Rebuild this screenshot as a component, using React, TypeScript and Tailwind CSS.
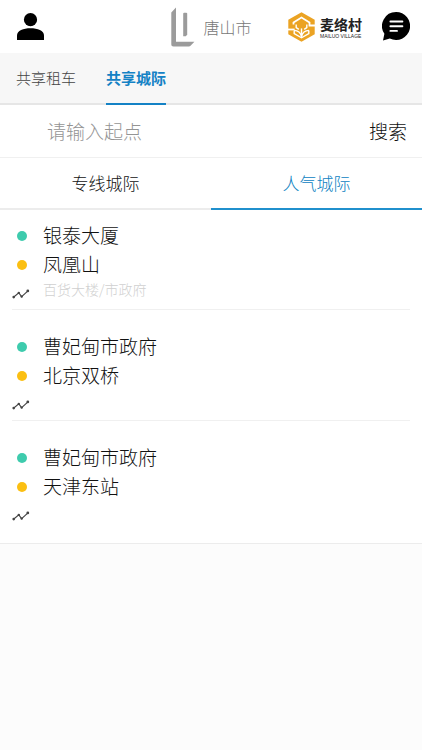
import { useState } from 'react';
import clsx from 'clsx';

interface Route {
  from: string;
  to: string;
  via?: string;
}

const ROUTES: Route[] = [
  { from: '银泰大厦', to: '凤凰山', via: '百货大楼/市政府' },
  { from: '曹妃甸市政府', to: '北京双桥' },
  { from: '曹妃甸市政府', to: '天津东站' },
];

const SERVICES = ['共享租车', '共享城际'];
const LINES = ['专线城际', '人气城际'];

function UserIcon() {
  return (
    <svg width="27" height="27" viewBox="0 0 27 27" fill="#000">
      <circle cx="13.5" cy="6.7" r="6.6" />
      <path d="M0 27v-4.6C0 17.6 6.4 15.2 13.5 15.2S27 17.6 27 22.4V27z" />
    </svg>
  );
}

function CityLogo() {
  return (
    <svg width="24" height="40" viewBox="0 0 24 40" fill="#9b9b9b">
      <path d="M0.3 5.5L5 0.6V34.8h18.4l-3.6 3.8c-.6.6-1.2.9-2 .9H2.5c-1.4 0-2.2-.8-2.2-2.2z" />
      <path d="M12.2 6.8q0-1 1-1h2q1 0 1 1v21l-1.4 1.4h-2.6z" />
    </svg>
  );
}

function VillageLogo() {
  return (
    <svg width="27" height="30" viewBox="0 0 27 30">
      <path d="M13.5 0.3L26.7 7.7v14.6L13.5 29.7 0.3 22.3V7.7z" fill="#eba323" />
      <path d="M4.6 12.6V10l8.9-5.4 8.9 5.4v2.6H27v1.8h-6.4V11l-7.1-4.4L6.4 11v1.6z" fill="#fff" />
      <path d="M0 16.6h6.6v1.8H0z" fill="#fff" />
      <path d="M8.4 12.4l5.1-3.8 5.1 3.8v3.2l-5.1 4-5.1-4z" fill="#eba323" />
      <g fill="none" stroke="#fff" strokeWidth="1.4">
        <path d="M8.2 12.4v3.2l2.6 1.8M18.8 12.4v3.2l-2.6 1.8" />
        <path d="M13.5 16.4v9.4" />
        <path d="M6 18.4c4 .2 6.6 2.2 7.5 6 .9-3.8 3.5-5.8 7.5-6" />
        <path d="M6.2 18.4v3.2l7.3 4.2 7.3-4.2v-3.2" />
      </g>
    </svg>
  );
}

function ChatIcon() {
  return (
    <svg width="28" height="29" viewBox="0 0 28 29">
      <path d="M14 0a14 14 0 1 1-6.2 26.5L1 28.4l1.4-6.6A14 14 0 0 1 14 0z" fill="#000" />
      <path d="M8.4 9.5h12M8.4 14.2h12M8.4 18.9h6.6" stroke="#fff" strokeWidth="1.9" strokeLinecap="round" />
    </svg>
  );
}

function RouteIcon() {
  return (
    <svg width="18" height="10" viewBox="0 0 18 10" fill="#444" stroke="#444">
      <path d="M1.5 8.2L6.8 3.9 9.6 7.6 16 1.8" fill="none" strokeWidth="1.1" />
      <g stroke="none">
        <circle cx="1.7" cy="8.1" r="1.3" />
        <circle cx="6.8" cy="3.9" r="1.2" />
        <circle cx="9.7" cy="7.6" r="1.2" />
        <circle cx="15.8" cy="1.9" r="1.4" />
      </g>
    </svg>
  );
}

function RouteItem({ route }: { route: Route }) {
  return (
    <li className="mx-3 h-[111px] border-b border-[#f0f0f0] pt-[22px] first:h-[99px] first:pt-[10px] last:border-b-0">
      <div className="flex h-[29px] items-center">
        <span className="mx-[5px] size-[10px] rounded-full bg-[#3ecbad]" />
        <span className="ml-[11px] pb-px text-[19px] leading-7">{route.from}</span>
      </div>
      <div className="flex h-[29px] items-center">
        <span className="mx-[5px] size-[10px] rounded-full bg-[#fbbf12]" />
        <span className="ml-[11px] pb-px text-[19px] leading-7">{route.to}</span>
      </div>
      <div className="flex h-[29px] items-center">
        <RouteIcon />
        {route.via && <span className="ml-[13px] pb-2 text-[14px] leading-[21px] text-[#d0d0d0]">{route.via}</span>}
      </div>
    </li>
  );
}

export default function App() {
  const [service, setService] = useState(1);
  const [line, setLine] = useState(1);
  const [start, setStart] = useState('');

  return (
    <div className="min-h-screen bg-[#fcfcfc] font-['Noto_Sans_CJK_SC',sans-serif] font-light text-[#111]">
      {/* Header */}
      <header className="grid h-[53px] grid-cols-[1fr_auto_1fr] items-center bg-white pr-3 pl-[17px]">
        <button aria-label="我的" className="w-fit">
          <UserIcon />
        </button>
        <button className="mr-1 flex items-center gap-2 text-[16px] leading-6 text-[#777]">
          <CityLogo />
          唐山市
        </button>
        <div className="flex items-center justify-end">
          <VillageLogo />
          <div className="mr-5 ml-[5px] whitespace-nowrap text-[#222]">
            <p className="text-[14px] leading-[18px] font-bold">麦络村</p>
            <p className="font-['Liberation_Sans',sans-serif] text-[5px] leading-[6px]">MAILUO VILLAGE</p>
          </div>
          <button aria-label="消息">
            <ChatIcon />
          </button>
        </div>
      </header>

      {/* Services */}
      <nav className="flex h-[52px] gap-[30px] border-b-2 border-[#e6e6e6] bg-[#f7f7f7] px-4">
        {SERVICES.map((name, i) => (
          <button
            key={name}
            onClick={() => setService(i)}
            className={clsx(
              '-mb-[2px] border-b-2 text-[15px] leading-[22px]',
              service === i ? 'border-[#1482c5] font-bold text-[#1482c5]' : 'border-transparent text-[#444]',
            )}
          >
            {name}
          </button>
        ))}
      </nav>

      {/* Search */}
      <form
        onSubmit={(e) => e.preventDefault()}
        className="flex h-[53px] items-center border-b border-[#f0f0f0] bg-white pr-[15px] pl-[47px] text-[19px] leading-7"
      >
        <input
          aria-label="起点"
          value={start}
          onChange={(e) => setStart(e.target.value)}
          placeholder="请输入起点"
          className="min-w-0 flex-1 outline-none placeholder:text-[#949494]"
        />
        <button type="submit">搜索</button>
      </form>

      {/* Line tabs */}
      <div className="grid h-[52px] grid-cols-2 border-b-2 border-[#ececec] bg-white">
        {LINES.map((name, i) => (
          <button
            key={name}
            onClick={() => setLine(i)}
            className={clsx(
              '-mb-[2px] border-b-2 text-[17px] leading-6',
              line === i ? 'border-[#2090cd] text-[#0d82c2]' : 'border-transparent',
            )}
          >
            {name}
          </button>
        ))}
      </div>

      <ul className="border-b border-[#ececec] bg-white pt-px pb-[11px]">
        {ROUTES.map((route) => (
          <RouteItem key={route.from + route.to} route={route} />
        ))}
      </ul>
    </div>
  );
}
